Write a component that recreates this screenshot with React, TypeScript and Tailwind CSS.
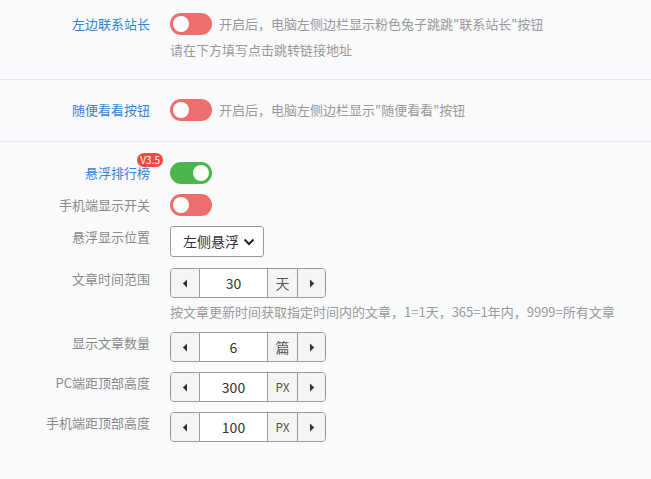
import React from 'react';

const font = { fontFamily: '"Noto Sans CJK SC", "Liberation Sans", sans-serif' };

function Toggle({ on, color }: { on: boolean; color: 'red' | 'green' }) {
  const bg = color === 'green' ? 'bg-[#4cb54c]' : 'bg-[#ee6e6e]';
  return (
    <div className={`flex h-[22px] w-[42px] shrink-0 items-center rounded-full px-[3px] ${bg} ${on ? 'justify-end' : 'justify-start'}`}>
      <div className="h-[16px] w-[16px] rounded-full bg-white" />
    </div>
  );
}

function Label({ text, blue, badge }: { text: string; blue?: boolean; badge?: string }) {
  return (
    <div className="relative w-[150px] shrink-0 text-right text-[13px] leading-[22px]">
      <span className={blue ? 'text-[#3184d8]' : 'text-[#8a8a8a]'}>{text}</span>
      {badge && (
        <span className="absolute right-[-13px] top-[-9px] rounded-full bg-[#f04a3e] px-[3px] text-[10px] leading-[14px] text-white">
          {badge}
        </span>
      )}
    </div>
  );
}

function Row({ children, className = '' }: { children: React.ReactNode; className?: string }) {
  return <div className={`flex items-start gap-[20px] ${className}`}>{children}</div>;
}

function Triangle({ dir }: { dir: 'left' | 'right' }) {
  return (
    <svg width="6" height="9" viewBox="0 0 6 9">
      {dir === 'left' ? <path d="M5 0.5 L0.8 4.5 L5 8.5 Z" fill="#333" /> : <path d="M1 0.5 L5.2 4.5 L1 8.5 Z" fill="#333" />}
    </svg>
  );
}

function NumberInput({ value, unit }: { value: string; unit: string }) {
  return (
    <div className="flex h-[30px] w-[156px] overflow-hidden rounded-[4px] border border-[#9a9a9a] bg-white">
      <div className="flex w-[28px] items-center justify-center bg-[#f5f5f5]">
        <Triangle dir="left" />
      </div>
      <div className="flex w-[69px] items-center justify-center border-x border-[#9a9a9a] text-[14px] text-[#333]">{value}</div>
      <div className={`flex w-[29px] items-center justify-center bg-[#f5f5f5] text-[#555] ${unit === 'PX' ? 'text-[12px]' : 'text-[14px]'}`}>
        {unit}
      </div>
      <div className="flex flex-1 items-center justify-center border-l border-[#9a9a9a] bg-[#f5f5f5]">
        <Triangle dir="right" />
      </div>
    </div>
  );
}

export default function App() {
  return (
    <div className="h-[479px] w-[651px] overflow-hidden bg-[#f9fafc]" style={font}>
      <div className="border-b border-[#e6e8ec] pb-[18px] pt-[13px]">
        <Row>
          <Label text="左边联系站长" blue />
          <div>
            <div className="flex items-center gap-[7px]">
              <Toggle on={false} color="red" />
              <span className="text-[13px] text-[#999]">开启后，电脑左侧边栏显示粉色兔子跳跳"联系站长"按钮</span>
            </div>
            <div className="mt-[4px] text-[13px] leading-[22px] text-[#999]">请在下方填写点击跳转链接地址</div>
          </div>
        </Row>
      </div>

      <div className="border-b border-[#e6e8ec] pb-[20px] pt-[19px]">
        <Row>
          <Label text="随便看看按钮" blue />
          <div className="flex items-center gap-[7px]">
            <Toggle on={false} color="red" />
            <span className="text-[13px] text-[#999]">开启后，电脑左侧边栏显示"随便看看"按钮</span>
          </div>
        </Row>
      </div>

      <div className="flex flex-col pt-[20px]">
        <Row>
          <Label text="悬浮排行榜" blue badge="V3.5" />
          <Toggle on color="green" />
        </Row>
        <Row className="mt-[10px]">
          <Label text="手机端显示开关" />
          <Toggle on={false} color="red" />
        </Row>
        <Row className="mt-[10px]">
          <Label text="悬浮显示位置" />
          <div className="flex h-[31px] items-center gap-[4px] rounded-[3px] border border-[#9a9a9a] bg-white pl-[12px] pr-[8px] text-[14px] text-[#333]">
            左侧悬浮
            <svg width="12" height="8" viewBox="0 0 12 8">
              <path d="M1.5 1.5 L6 6 L10.5 1.5" fill="none" stroke="#222" strokeWidth="2" />
            </svg>
          </div>
        </Row>
        <Row className="mt-[11px]">
          <Label text="文章时间范围" />
          <div>
            <NumberInput value="30" unit="天" />
            <div className="mt-[3px] text-[13px] leading-[22px] text-[#999]">
              按文章更新时间获取指定时间内的文章，1=1天，365=1年内，9999=所有文章
            </div>
          </div>
        </Row>
        <Row className="mt-[9px]">
          <Label text="显示文章数量" />
          <NumberInput value="6" unit="篇" />
        </Row>
        <Row className="mt-[10px]">
          <Label text="PC端距顶部高度" />
          <NumberInput value="300" unit="PX" />
        </Row>
        <Row className="mt-[10px]">
          <Label text="手机端距顶部高度" />
          <NumberInput value="100" unit="PX" />
        </Row>
      </div>
    </div>
  );
}
